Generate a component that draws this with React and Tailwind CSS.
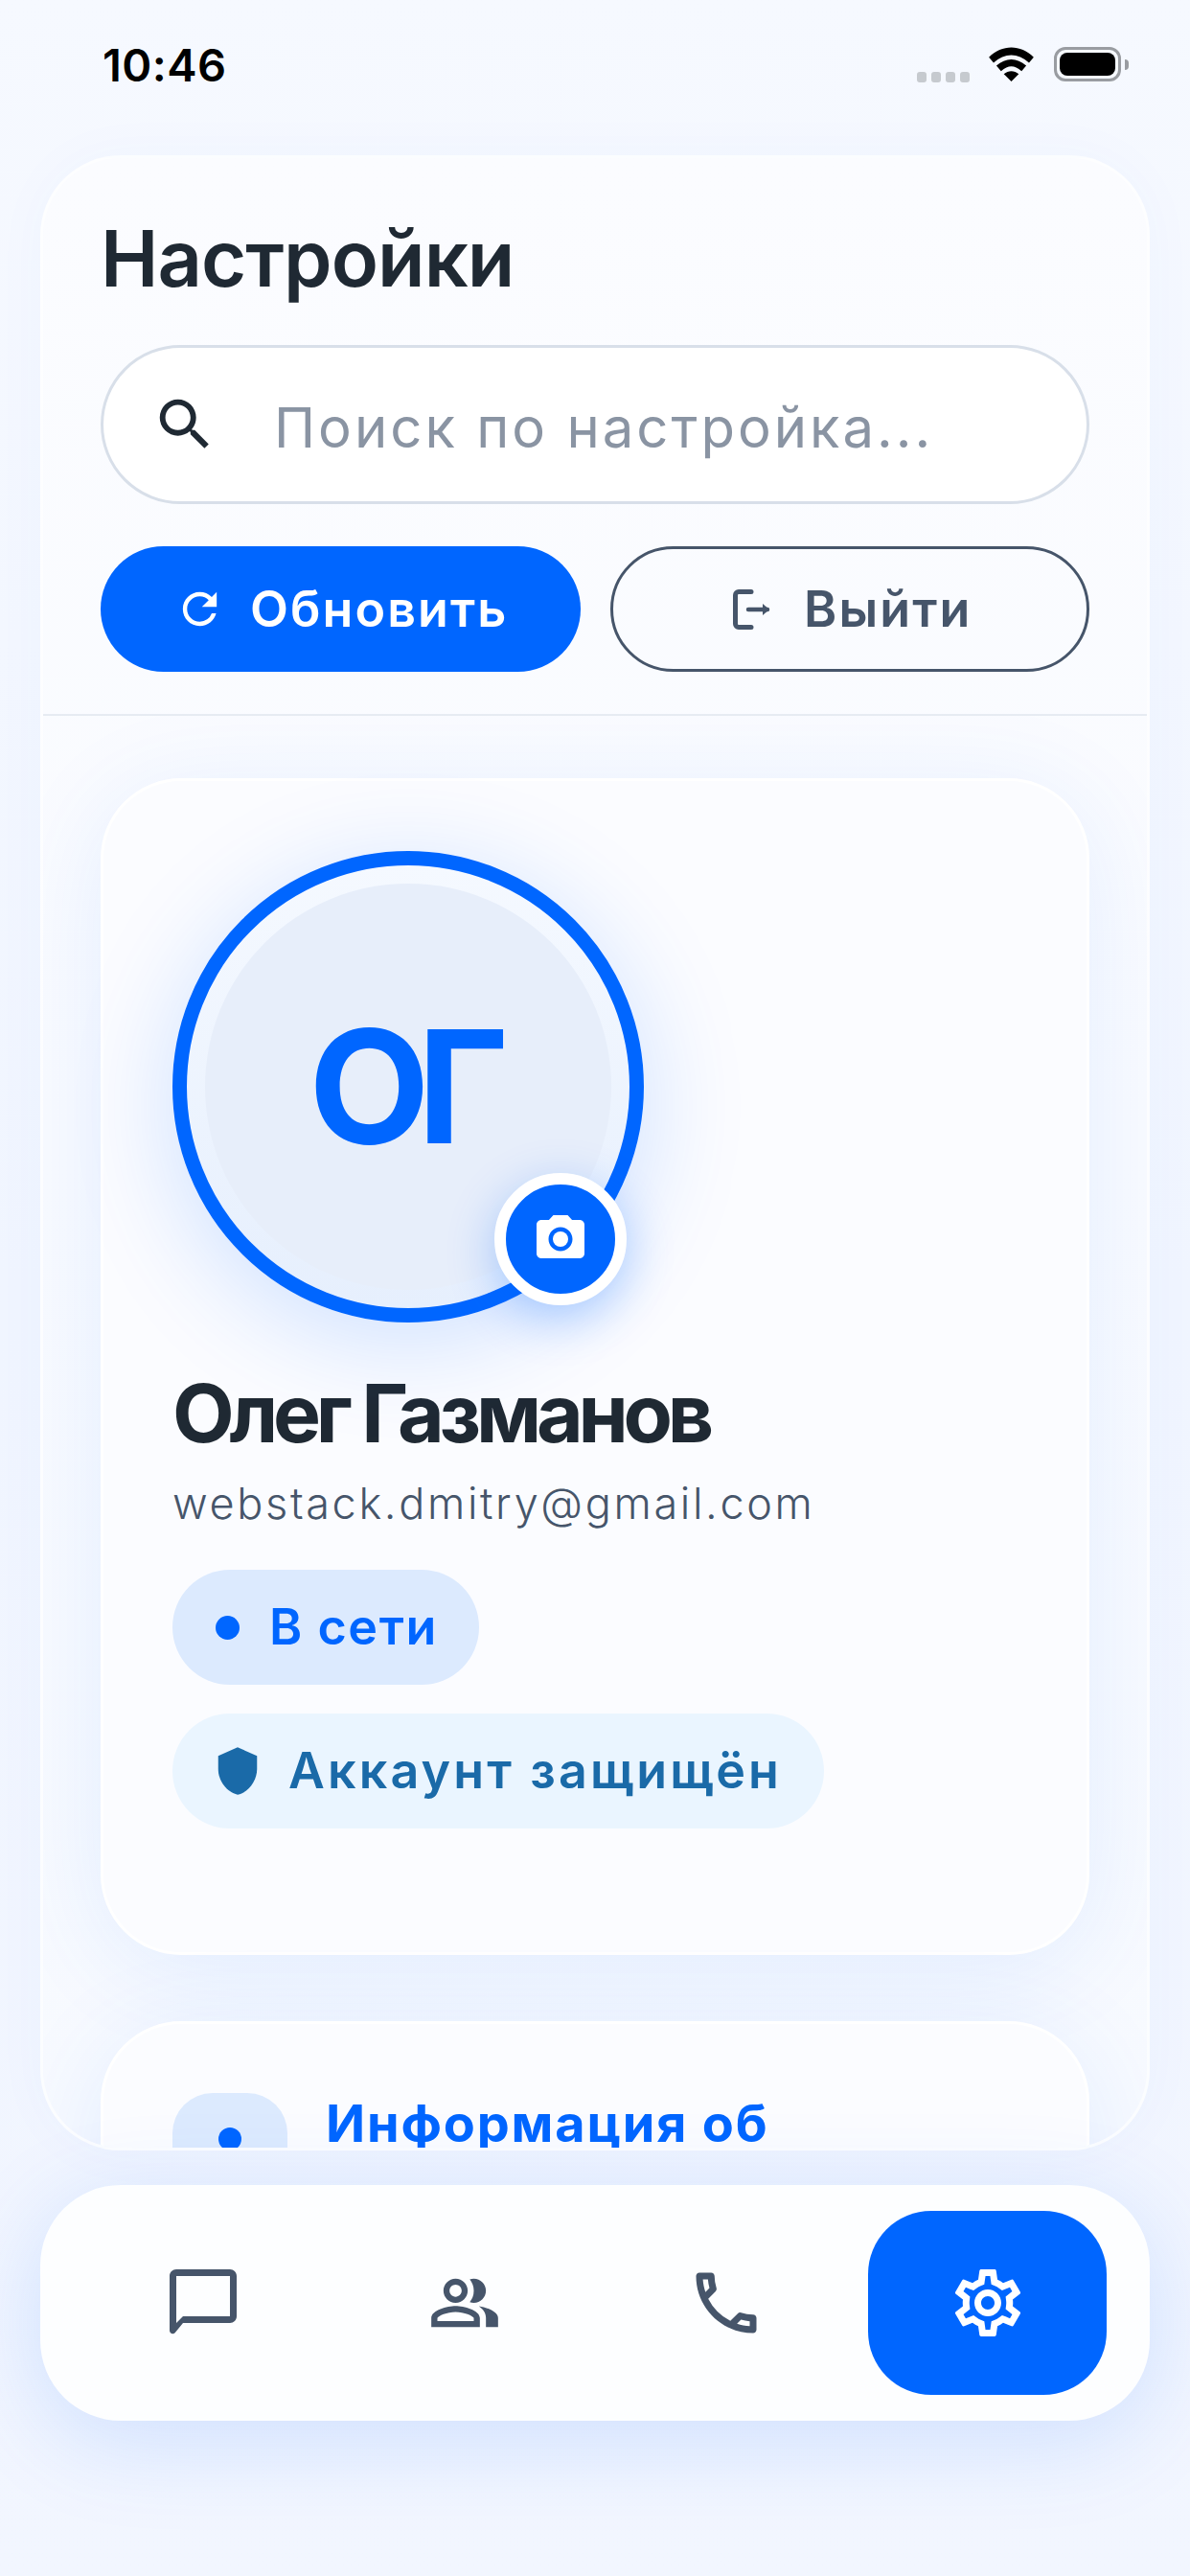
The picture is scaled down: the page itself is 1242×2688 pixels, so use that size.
import React from "react";
import { MdSearch, MdRefresh, MdPhotoCamera, MdShield, MdOutlinePeopleAlt, MdOutlineCall, MdOutlineSettings } from "react-icons/md";

const font = { fontFamily: "Inter, 'Noto Sans', sans-serif" };

function StatusBar() {
  return (
    <div className="h-[162px] flex items-start justify-between pl-[107px] pr-[72px] pt-[41px]">
      <div className="text-[47px] leading-[54px] font-semibold text-black tracking-[0.01em]">10:46</div>
      <div className="flex items-start pt-[8px]">
        <div className="flex gap-[5px] mt-[26px]">
          {[0, 1, 2, 3].map((i) => (
            <div key={i} className="w-[10px] h-[11px] rounded-[3px] bg-[#c6cacf]" />
          ))}
        </div>
        <svg className="ml-[20px]" width="47" height="36" viewBox="0 0 48 37">
          <path d="M0 11 C14 -3 34 -3 48 11 L43 17 C31 6 17 6 5 17 Z" fill="#000" />
          <path d="M8 20 C18 11 30 11 40 20 L35 26 C27 19 21 19 13 26 Z" fill="#000" />
          <path d="M16 29 C21 25 27 25 32 29 L24 37 Z" fill="#000" />
        </svg>
        <div className="ml-[21px] relative w-[70px] h-[36px] rounded-[12px] border-[3px] border-[#999ca1] p-[3px]">
          <div className="w-full h-full rounded-[8px] bg-black" />
          <div className="absolute right-[-11px] top-[10px] w-[4px] h-[11px] rounded-r-[4px] bg-[#999ca1]" />
        </div>
      </div>
    </div>
  );
}

function LogoutIcon() {
  return (
    <svg width="40" height="42" viewBox="0 0 40 42" fill="none" stroke="currentColor" strokeWidth="5" strokeLinecap="round" strokeLinejoin="round">
      <path d="M19 2.500H6a3.500 3.500 0 0 0-3.500 3.500V36a3.500 3.500 0 0 0 3.500 3.500H19" />
      <path d="M16 21H36" strokeWidth="4.500" />
      <path d="M31 15L38 21L31 27Z" fill="currentColor" stroke="none" />
    </svg>
  );
}

function Header() {
  return (
    <div className="px-[60px] border-b-[2px] border-[#e6ebf2] shrink-0">
      <div className="pt-[60px] text-[81px] leading-[90px] font-semibold text-[#1f2933] tracking-[-0.012em]">Настройки</div>
      <div className="mt-[45px] h-[166px] rounded-full border-[3px] border-[#d8dfe9] bg-white flex items-center pl-[50px]">
        <MdSearch className="text-[#1f2933] w-[70px] h-[70px] shrink-0" />
        <div className="ml-[58px] mt-[5px] text-[58px] leading-[68px] text-[#8a94a3] tracking-[0.052em] whitespace-nowrap">Поиск по настройка...</div>
      </div>
      <div className="mt-[44px] mb-[44px] grid grid-cols-2 gap-[31px]">
        <div className="h-[131px] rounded-full bg-[#0066ff] flex items-center justify-center gap-[26px] pl-[2px] text-white">
          <MdRefresh className="w-[53px] h-[53px]" />
          <span className="text-[52px] leading-[60px] font-semibold tracking-[0.04em]">Обновить</span>
        </div>
        <div className="h-[131px] rounded-full border-[3px] border-[#46556a] flex items-center justify-center gap-[34px] pl-[6px] text-[#46556a]">
          <LogoutIcon />
          <span className="text-[52px] leading-[60px] font-semibold tracking-[0.04em]">Выйти</span>
        </div>
      </div>
    </div>
  );
}

function ProfileCard() {
  return (
    <div className="h-[1228px] shrink-0 rounded-[84px] border-[3px] border-white bg-[#fbfcff] shadow-[0_16px_110px_rgba(0,102,255,0.09)] pt-[73px] px-[72px]">
      <div className="relative w-[492px] h-[492px] rounded-full border-[15px] border-[#0066ff] p-[19px] shadow-[0_20px_110px_rgba(0,102,255,0.18)] bg-gradient-to-b from-[#f5f9ff] to-[#e6effd]">
        <div className="w-full h-full rounded-full bg-[#e7eefa] flex items-center justify-center">
          <span className="mr-[12px] text-[164px] leading-none font-bold text-[#0066ff] tracking-[-0.08em]">ОГ</span>
        </div>
        <div className="absolute left-[321px] top-[321px] w-[138px] h-[138px] rounded-full border-[12px] border-white bg-[#0066ff] flex items-center justify-center shadow-[0_14px_50px_rgba(0,102,255,0.3)]">
          <MdPhotoCamera className="text-white w-[60px] h-[60px]" />
        </div>
      </div>
      <div className="mt-[45px] text-[84px] leading-[100px] font-bold text-[#1f2933] tracking-[-0.062em]">Олег Газманов</div>
      <div className="mt-[17px] text-[45px] leading-[54px] font-[350] text-[#46556a] tracking-[0.059em]">webstack.dmitry@gmail.com</div>
      <div className="mt-[42px] w-fit h-[120px] rounded-full bg-[#dceafe] flex items-center pl-[45px] pr-[43px]">
        <div className="w-[25px] h-[25px] rounded-full bg-[#0066ff]" />
        <span className="ml-[31px] text-[52px] leading-[60px] font-semibold text-[#0066ff] tracking-[0.03em]">В сети</span>
      </div>
      <div className="mt-[30px] w-fit h-[120px] rounded-full bg-[#eaf5ff] flex items-center pl-[41px] pr-[44px]">
        <MdShield className="text-[#1a6aa8] w-[54px] h-[54px]" />
        <span className="ml-[26px] text-[52px] leading-[60px] font-semibold text-[#1a6aa8] tracking-[0.06em]">Аккаунт защищён</span>
      </div>
    </div>
  );
}

function InfoCard() {
  return (
    <div className="mt-[69px] h-[400px] shrink-0 rounded-[84px] border-[3px] border-white bg-[#fbfcff] shadow-[0_16px_110px_rgba(0,102,255,0.09)] pt-[72px] px-[72px] flex gap-[40px] items-start">
      <div className="w-[120px] h-[120px] rounded-[42px] bg-[#dceafe] flex justify-center pt-[36px] shrink-0">
        <div className="w-[24px] h-[24px] rounded-full bg-[#0066ff]" />
      </div>
      <div className="text-[54px] leading-[64px] font-bold text-[#0066ff] tracking-[0.034em]">Информация об</div>
    </div>
  );
}

function ChatIcon() {
  return (
    <svg width="84" height="84" viewBox="0 0 24 24" fill="#46556a">
      <path d="M20 2H4c-1.100 0-2 .9-2 2v16.200c0 .9 1 1.300 1.600.7L6 18h14c1.100 0 2-.9 2-2V4c0-1.100-.9-2-2-2zm0 14H6l-2 2V4h16v12z" />
    </svg>
  );
}

function BottomNav() {
  return (
    <div className="mt-[36px] h-[246px] rounded-[84px] bg-[#fdfeff] shadow-[0_20px_100px_rgba(0,102,255,0.15)] grid grid-cols-4 items-center gap-[24px] px-[45px] shrink-0">
      <div className="flex justify-center"><ChatIcon /></div>
      <div className="flex justify-center"><MdOutlinePeopleAlt className="w-[76px] h-[76px] text-[#46556a]" /></div>
      <div className="flex justify-center"><MdOutlineCall className="w-[84px] h-[84px] text-[#46556a]" /></div>
      <div className="h-[192px] rounded-[66px] bg-[#0066ff] flex items-center justify-center">
        <MdOutlineSettings className="w-[84px] h-[84px] text-white" />
      </div>
    </div>
  );
}

export default function App() {
  return (
    <div style={font} className="w-[1242px] h-[2688px] overflow-hidden flex flex-col px-[42px] bg-gradient-to-b from-[#f6f9ff] via-[#f0f5ff] to-[#f2f6ff]">
      <div className="-mx-[42px]"><StatusBar /></div>
      <div className="h-[2082px] shrink-0 rounded-[84px] border-[3px] border-white/50 bg-gradient-to-b from-[#fbfcff] to-[#f7faff] shadow-[0_0_60px_rgba(0,102,255,0.03)] flex flex-col overflow-hidden">
        <Header />
        <div className="flex-1 overflow-hidden px-[60px] pt-[65px] flex flex-col">
          <ProfileCard />
          <InfoCard />
        </div>
      </div>
      <BottomNav />
    </div>
  );
}
